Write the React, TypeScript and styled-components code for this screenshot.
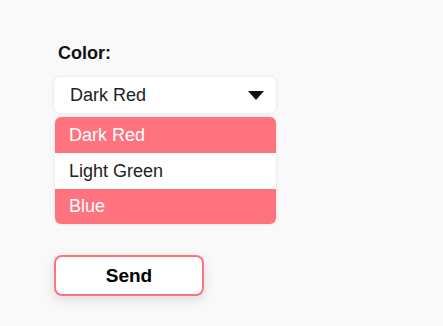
import React, { useState } from "react";
import styled, { createGlobalStyle } from "styled-components";

const GlobalStyle = createGlobalStyle`
  html, body {
    margin: 0;
    padding: 0;
    background: #f9f9f9;
    font-family: "Liberation Sans", Arial, sans-serif;
  }
`;

const options = ["Dark Red", "Light Green", "Blue"];

export default function App() {
  const [value, setValue] = useState("Dark Red");
  return (
    <>
      <GlobalStyle />
      <Page>
        <Label>Color:</Label>
        <Select>
          <span>{value}</span>
          <Arrow viewBox="0 0 16 9">
            <path d="M0 0 L16 0 L8 9 Z" fill="#111" />
          </Arrow>
        </Select>
        <List>
          {options.map((o, i) => (
            <Option key={o} $highlight={i !== 1} onClick={() => setValue(o)}>
              {o}
            </Option>
          ))}
        </List>
        <SendButton>Send</SendButton>
      </Page>
    </>
  );
}

const Page = styled.div`
  width: 443px;
  height: 326px;
  box-sizing: border-box;
  padding: 43px 0 0 54px;
  display: flex;
  flex-direction: column;
  align-items: flex-start;
`;

const Label = styled.div`
  font-size: 18px;
  font-weight: bold;
  color: #111;
  margin-left: 4px;
  line-height: 21px;
`;

const Select = styled.div`
  margin-top: 13px;
  width: 222px;
  height: 36px;
  box-sizing: border-box;
  background: #fff;
  border-radius: 6px;
  box-shadow: 0 0 3px rgba(0, 0, 0, 0.12);
  display: flex;
  align-items: center;
  justify-content: space-between;
  padding: 0 12px 0 16px;
  font-size: 18px;
  color: #222;
`;

const Arrow = styled.svg`
  width: 16px;
  height: 9px;
`;

const List = styled.div`
  margin-top: 4px;
  margin-left: 1px;
  width: 221px;
  border-radius: 6px;
  overflow: hidden;
  background: #fff;
  box-shadow: 0 0 3px rgba(0, 0, 0, 0.12);
`;

const Option = styled.div<{ $highlight: boolean }>`
  height: 36px;
  display: flex;
  align-items: center;
  padding-left: 14px;
  font-size: 18px;
  background: ${(p) => (p.$highlight ? "#ff737f" : "#fff")};
  color: ${(p) => (p.$highlight ? "#fff" : "#222")};
  cursor: pointer;
  &:last-child {
    height: 35px;
  }
`;

const SendButton = styled.button`
  margin-top: 31px;
  width: 150px;
  height: 41px;
  background: #fff;
  border: 2px solid #ff737f;
  border-radius: 8px;
  box-shadow: 0 4px 12px rgba(0, 0, 0, 0.12);
  font-family: "Liberation Sans", Arial, sans-serif;
  font-size: 19px;
  font-weight: bold;
  color: #000;
  cursor: pointer;
`;
